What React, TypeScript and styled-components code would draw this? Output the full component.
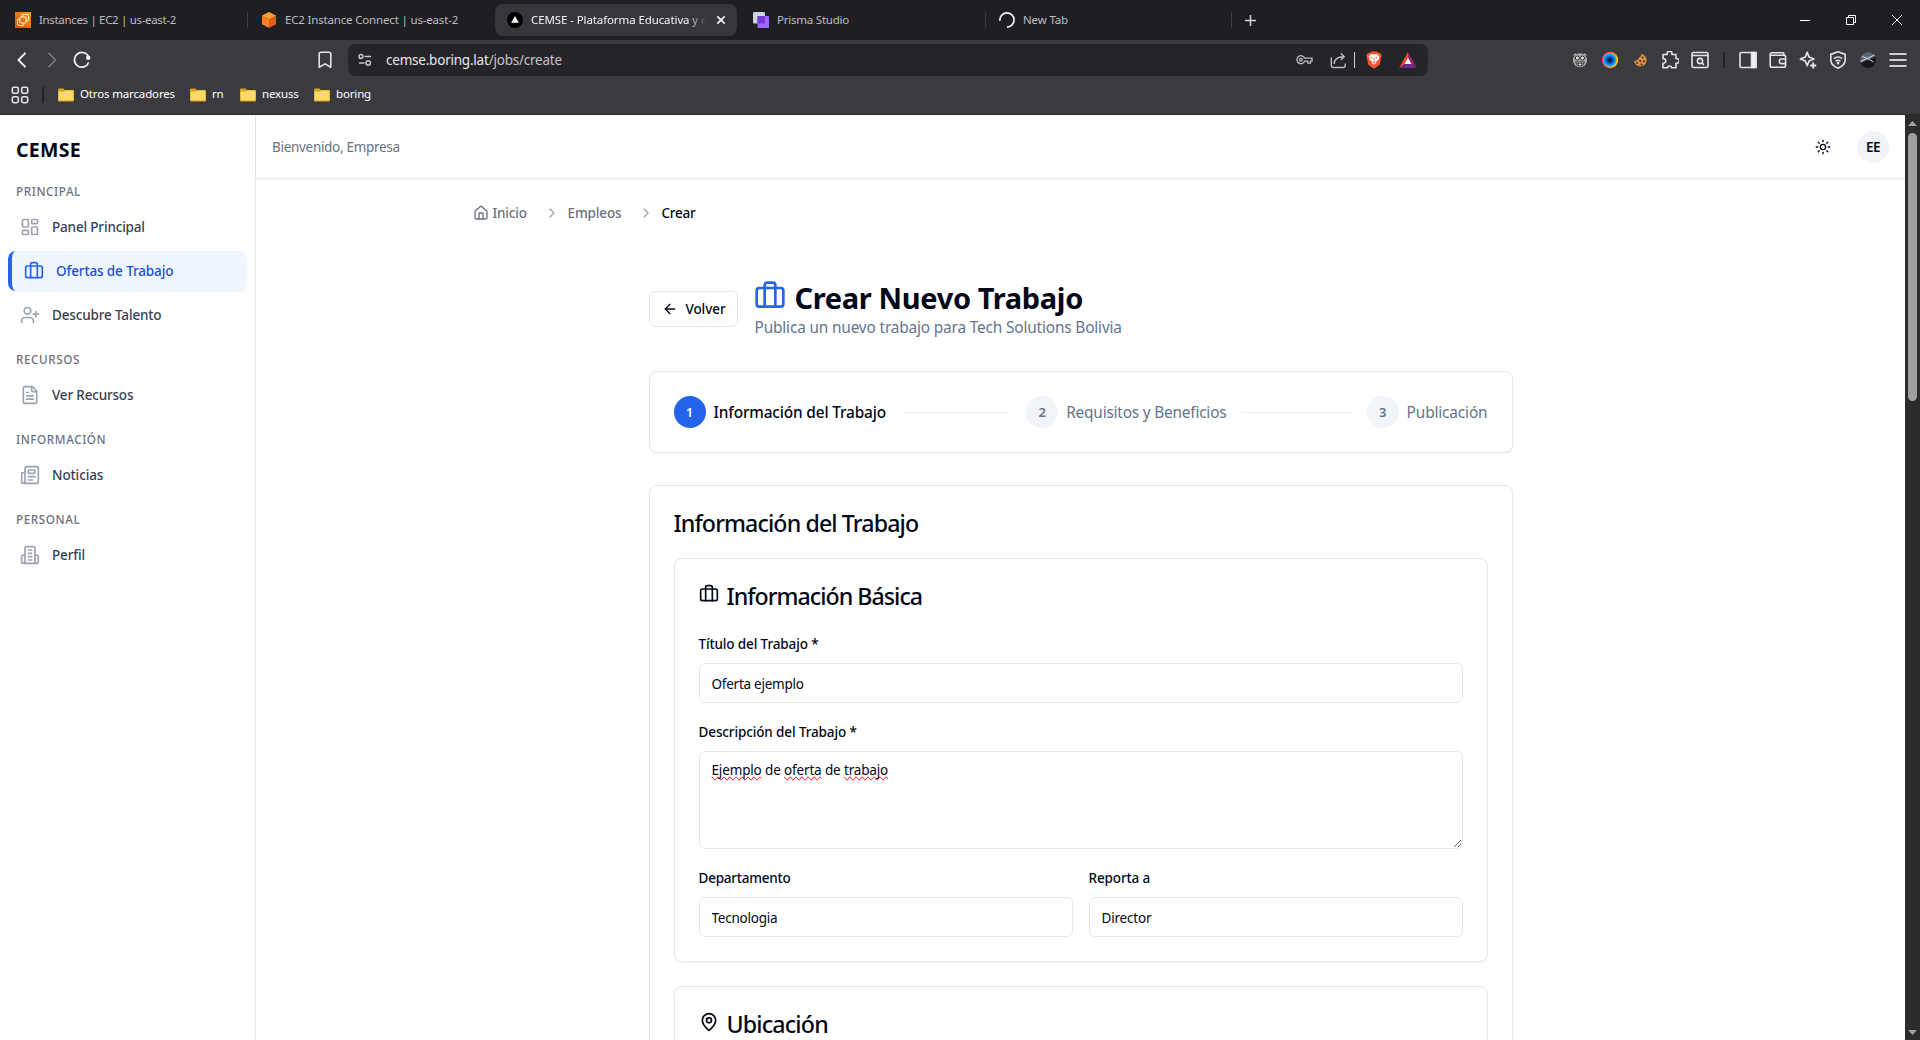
import React from "react";
import styled, { createGlobalStyle, css } from "styled-components";
import {
  ArrowLeft,
  Briefcase,
  ChevronRight,
  FileText,
  House,
  LayoutDashboard,
  MapPin,
  Newspaper,
  Sun,
  UserPlus,
} from "lucide-react";

const GlobalStyle = createGlobalStyle`
  * { box-sizing: border-box; }
  html, body { margin: 0; padding: 0; overflow: hidden; }
  body { font-family: "Noto Sans", "Open Sans", sans-serif; background: #ffffff; }
  svg { display: block; flex: none; }
`;

const Window = styled.div`
  width: 1920px;
  height: 1040px;
  display: flex;
  flex-direction: column;
  overflow: hidden;
`;

const Label = styled.span<{ $ls?: number }>`
  letter-spacing: ${(p) => p.$ls ?? 0}px;
  white-space: nowrap;
`;

/* ---------- Browser: tab strip ---------- */

const TabStrip = styled.div`
  height: 40px;
  flex: none;
  display: flex;
  align-items: center;
  padding-left: 1px;
  background: #1f1e23;
  color: #bdbdc0;
`;

const TabSlot = styled.div<{ $divider?: boolean }>`
  width: 246px;
  height: 32px;
  display: flex;
  align-items: center;
  &::before {
    content: "";
    width: 1px;
    height: 16px;
    margin-right: 1px;
    background: ${(p) => (p.$divider ? "#3d3c41" : "transparent")};
  }
`;

const TabBody = styled.div<{ $active?: boolean }>`
  width: 242px;
  height: 32px;
  display: flex;
  align-items: center;
  gap: 8px;
  padding: 0 8px 0 12px;
  border-radius: 8px;
  font-size: 11.5px;
  ${(p) =>
    p.$active &&
    css`
      background: #37363b;
      color: #f4f4f5;
    `}
`;

const TabTitle = styled.div<{ $faded?: boolean }>`
  flex: 1;
  overflow: hidden;
  white-space: nowrap;
  padding-bottom: 2px;
  ${(p) =>
    p.$faded &&
    css`
      mask-image: linear-gradient(to right, #000 156px, transparent 176px);
    `}
`;

const NewTab = styled.div`
  display: flex;
  align-items: center;
  gap: 13px;
  &::before {
    content: "";
    width: 1px;
    height: 16px;
    background: #3d3c41;
  }
`;

const WindowButtons = styled.div`
  margin-left: auto;
  display: flex;
  > div {
    width: 46px;
    display: flex;
    justify-content: center;
  }
`;

/* ---------- Browser: toolbar ---------- */

const Toolbar = styled.div`
  height: 75px;
  flex: none;
  background: #3b3a3f;
  border-bottom: 1px solid #2b2a2e;
`;

const NavRow = styled.div`
  height: 40px;
  display: flex;
  align-items: center;
`;

const NavButtons = styled.div`
  width: 348px;
  display: flex;
  align-items: center;
  padding: 0 16px 0 13px;
  gap: 12px;
  svg:last-child {
    margin-left: auto;
  }
`;

const AddressBar = styled.div`
  width: 1080px;
  height: 32px;
  display: flex;
  align-items: center;
  padding: 0 11px 0 10px;
  border-radius: 8px;
  background: #252429;
  color: #e9e9ea;
  font-size: 13.5px;
`;

const Url = styled.div`
  flex: 1;
  margin-left: 14px;
  span + span {
    color: #c4c4c6;
  }
`;

const Pipe = styled.div<{ $c: string; $w?: number }>`
  width: ${(p) => p.$w ?? 1}px;
  height: 16px;
  background: ${(p) => p.$c};
`;

const AddressTools = styled.div`
  display: flex;
  align-items: center;
  svg + svg {
    margin-left: 17px;
  }
  ${Pipe} {
    margin: 0 11px 0 7px;
  }
`;

const ToolIcons = styled.div`
  flex: 1;
  display: flex;
  justify-content: flex-end;
  align-items: center;
  padding-right: 13px;
  gap: 12px;
  ${Pipe} {
    margin: 0 2px;
  }
`;

const BookmarkRow = styled.div`
  height: 29px;
  display: flex;
  align-items: center;
  padding-left: 11px;
  color: #ffffff;
  font-size: 11.5px;
  ${Pipe} {
    margin: 0 14px 0 13px;
  }
`;

const Bookmark = styled.div<{ $w: number }>`
  width: ${(p) => p.$w}px;
  display: flex;
  align-items: center;
  gap: 6px;
  ${Label} {
    padding-bottom: 2px;
  }
`;

/* ---------- Page ---------- */

const Viewport = styled.div`
  flex: 1;
  min-height: 0;
  display: flex;
`;

const Sidebar = styled.aside`
  width: 256px;
  flex: none;
  border-right: 1px solid #e2e8f0;
  padding: 20px 8px 0;
`;

const Brand = styled.div`
  height: 32px;
  line-height: 29px;
  padding-left: 8px;
  font-size: 19.5px;
  font-weight: 700;
  color: #020817;
  letter-spacing: 0.3px;
`;

const NavHeading = styled.div`
  height: 16px;
  line-height: 16px;
  margin: 16px 0 8px;
  padding-left: 8px;
  font-size: 11.7px;
  font-weight: 500;
  letter-spacing: 0.58px;
  color: #6b7280;
`;

const NavItem = styled.div<{ $active?: boolean }>`
  height: 40px;
  display: flex;
  align-items: center;
  gap: 12px;
  padding-left: 12px;
  border-radius: 8px;
  font-size: 13.5px;
  font-weight: 500;
  color: #374151;
  svg {
    color: #9ca3af;
  }
  & + & {
    margin-top: 4px;
  }
  ${(p) =>
    p.$active &&
    css`
      border-left: 4px solid #2563eb;
      background: #eff6ff;
      color: #1d4ed8;
      box-shadow: 0 1px 2px rgba(0, 0, 0, 0.05);
      svg {
        color: #2563eb;
      }
    `}
`;

const Main = styled.main`
  flex: 1;
  min-width: 0;
  display: flex;
  flex-direction: column;
`;

const Header = styled.header`
  height: 64px;
  flex: none;
  display: flex;
  align-items: center;
  padding: 0 16px;
  border-bottom: 1px solid #e5e7eb;
  box-shadow: 0 1px 2px rgba(0, 0, 0, 0.05);
  font-size: 13.5px;
  color: #6b7280;
`;

const HeaderActions = styled.div`
  margin-left: auto;
  display: flex;
  align-items: center;
  color: #020817;
`;

const Avatar = styled.div`
  width: 32px;
  height: 32px;
  margin-left: 26px;
  border-radius: 50%;
  display: flex;
  align-items: center;
  justify-content: center;
  background: #f1f5f9;
  color: #020817;
  font-weight: 600;
  letter-spacing: -0.5px;
`;

const Container = styled.div`
  width: 1280px;
  margin: 0 auto;
  padding: 24px 32px 0;
  flex: 1;
  min-height: 0;
`;

const Breadcrumb = styled.nav`
  height: 20px;
  display: flex;
  align-items: center;
  font-size: 13.5px;
  font-weight: 500;
  color: #6b7280;
`;

const Crumb = styled.div<{ $current?: boolean; $w?: number }>`
  width: ${(p) => (p.$w ? `${p.$w}px` : "auto")};
  display: flex;
  align-items: center;
  gap: 4px;
  color: ${(p) => (p.$current ? "#020817" : "inherit")};
`;

const CrumbArrow = styled(ChevronRight)`
  margin: 0 8px 0 16px;
  color: #9ca3af;
`;

const Form = styled.div`
  width: 864px;
  margin: 56px auto 0;
  color: #020817;
`;

const TitleBar = styled.div`
  display: flex;
  align-items: center;
  gap: 17px;
  height: 60px;
`;

const BackButton = styled.button`
  width: 89px;
  height: 36px;
  display: flex;
  align-items: center;
  gap: 8px;
  padding: 0 0 0 12px;
  border: 1px solid #e2e8f0;
  border-radius: 6px;
  background: #ffffff;
  color: #020817;
  font: 500 13.5px "Noto Sans", sans-serif;
`;

const Title = styled.h1`
  display: flex;
  gap: 9px;
  height: 36px;
  margin: 0;
  line-height: 38px;
  font-size: 29px;
  font-weight: 700;
  svg {
    color: #2563eb;
    margin: 1px 0 0 -1px;
  }
`;

const Subtitle = styled.p`
  margin: 0;
  padding-top: 1px;
  font-size: 15.4px;
  line-height: 23px;
  color: #64748b;
`;

const Card = styled.section<{ $mt?: number }>`
  margin-top: ${(p) => p.$mt ?? 32}px;
  padding: 24px;
  border: 1px solid #e2e8f0;
  border-radius: 8px;
  background: #ffffff;
  box-shadow: 0 1px 2px rgba(0, 0, 0, 0.05);
`;

const Stepper = styled.div`
  display: flex;
  align-items: center;
  font-size: 15.4px;
`;

const Step = styled.div<{ $active?: boolean }>`
  display: flex;
  align-items: center;
  gap: 8px;
  color: ${(p) => (p.$active ? "#020817" : "#64748b")};
  font-weight: ${(p) => (p.$active ? 500 : 400)};
`;

const StepNumber = styled.div<{ $active?: boolean }>`
  width: 32px;
  height: 32px;
  border-radius: 50%;
  display: flex;
  align-items: center;
  justify-content: center;
  font-size: 13px;
  font-weight: 600;
  background: ${(p) => (p.$active ? "#2563eb" : "#f1f5f9")};
  color: ${(p) => (p.$active ? "#f8fafc" : "#64748b")};
`;

const StepLine = styled.div`
  flex: 1;
  height: 1px;
  margin: 0 16px;
  background: #eff3f8;
`;

const CardTitle = styled.h3`
  display: flex;
  align-items: center;
  gap: 8px;
  height: 24px;
  margin: 0;
  padding-top: 1px;
  font-size: 23.2px;
  font-weight: 500;
  line-height: 24px;
  svg {
    margin-top: -3px;
  }
`;

const Fields = styled.div`
  display: grid;
  grid-template-columns: 1fr 1fr;
  gap: 16px;
  margin-top: 24px;
`;

const Field = styled.div<{ $wide?: boolean }>`
  grid-column: ${(p) => (p.$wide ? "1 / -1" : "auto")};
`;

const FieldLabel = styled.label<{ $ls: number }>`
  display: block;
  height: 24px;
  margin-bottom: 8px;
  line-height: 27px;
  font-size: 13.5px;
  font-weight: 500;
  letter-spacing: ${(p) => p.$ls}px;
`;

const Input = styled.input<{ $ls: number }>`
  display: block;
  width: 100%;
  height: 40px;
  padding: 2px 12px 0;
  border: 1px solid #e2e8f0;
  border-radius: 6px;
  outline: none;
  background: #ffffff;
  color: #020817;
  font: 400 13.5px "Noto Sans", sans-serif;
  letter-spacing: ${(p) => p.$ls}px;
`;

const TextArea = styled.div`
  height: 98px;
  padding: 8px 12px;
  border: 1px solid #e2e8f0;
  border-radius: 6px;
  overflow: hidden;
  resize: vertical;
  font-size: 13.5px;
  line-height: 20px;
  letter-spacing: -0.15px;
`;

const Misspelled = styled.span`
  text-decoration-line: spelling-error;
`;

/* ---------- Scrollbar ---------- */

const Scrollbar = styled.div`
  width: 15px;
  flex: none;
  display: flex;
  flex-direction: column;
  align-items: center;
  padding: 6px 0 5px;
  background: #2c2c2c;
`;

const Thumb = styled.div`
  width: 9px;
  height: 268px;
  margin: 7px 0 auto;
  border-radius: 5px;
  background: #9f9f9f;
`;

/* ---------- Drawn icons ---------- */

const line = { fill: "none", stroke: "#e4e4e6", strokeWidth: 1.6 } as const;

const Ec2Icon = () => (
  <svg width="16" height="16" viewBox="0 0 16 16">
    <defs>
      <linearGradient id="ec2" x1="0" y1="1" x2="1" y2="0">
        <stop offset="0" stopColor="#cf5508" />
        <stop offset="1" stopColor="#ff9a06" />
      </linearGradient>
    </defs>
    <rect width="16" height="16" fill="url(#ec2)" />
    <g fill="none" stroke="#fff" strokeWidth="0.9">
      <path d="M7 5V3.400q0-.8.8-.8h4.900q.8 0 .8.8V8q0 .8-.8.8h-1.500" />
      <path d="M4.800 7.400H3.400q-.8 0-.8.8v4.400q0 .8.8.8H8q.8 0 .8-.8V11" />
      <rect x="4.900" y="5" width="6.200" height="6" rx="0.800" />
    </g>
  </svg>
);

const CubeIcon = () => (
  <svg width="16" height="16" viewBox="0 0 16 16">
    <path d="M8 0l7 3.600L8 7.600 1 3.600z" fill="#ff9d2e" />
    <path d="M1 3.600l7 4V16l-7-3.800z" fill="#f8812a" />
    <path d="M15 3.600l-7 4V16l7-3.800z" fill="#ea5a1c" />
  </svg>
);

const VercelIcon = () => (
  <svg width="16" height="16" viewBox="0 0 16 16">
    <circle cx="8" cy="8" r="8" fill="#000" />
    <path d="M8 4l3.800 6.800H4.200z" fill="#fff" />
  </svg>
);

const PrismaIcon = () => (
  <svg width="16" height="16" viewBox="0 0 16 16">
    <rect width="12" height="11.500" rx="1" fill="#cbd5e0" />
    <rect x="4.500" y="4" width="11.500" height="12" rx="1" fill="#9f67ff" />
    <rect x="4.500" y="4" width="7.500" height="7.500" fill="#7738d8" />
  </svg>
);

const SpinnerIcon = () => (
  <svg width="16" height="16" viewBox="0 0 16 16" fill="none" stroke="#f0f0f1" strokeWidth="1.700">
    <path d="M.9 8.800A7.100 7.100 0 1 1 8 15.100" />
  </svg>
);

const FolderIcon = () => (
  <svg width="16" height="14" viewBox="0 0 16 14">
    <path d="M0 1.600Q0 .6 1 .6h4.500L7 2h8q1 0 1 1v9.400q0 1-1 1H1q-1 0-1-1z" fill="#d9a321" />
    <path d="M.6 3.600h5.600l1.400-1h7.200q.6 0 .6.8v8.200q0 1-1 1H1.400q-.8 0-.8-.8z" fill="#ffda66" />
  </svg>
);

const BraveIcon = () => (
  <svg width="16" height="18" viewBox="0 0 16 18">
    <path d="M5 .5h6l1.500 1.400 1.800.2 1.500 2.400-.6 1.600-1.200 6.400q-.3 1.300-1.600 2.200L8 17.800l-4.400-3.100Q2.300 13.800 2 12.500L.8 6.100.2 4.500l1.500-2.400 1.800-.2z" fill="#fb542b" />
    <path d="M5 3l3 .5L11 3l2.400 2.600-.9 3.200-2.500 2 .3 1.200L8 13.800 5.700 12l.3-1.200-2.500-2-.9-3.200z" fill="#fff" />
    <path d="M4.300 6l2.300.6-.8 1.100zM11.700 6l-2.300.6.8 1.100zM8 5.600l.5 3.300L8 10l-.5-1.100zM6.300 11L8 10.200l1.700.8L8 12.200z" fill="#fb542b" />
  </svg>
);

const BatIcon = () => (
  <svg width="18" height="16" viewBox="0 0 18 16">
    <path d="M9 0L0 16l9-6z" fill="#ff4724" />
    <path d="M9 0l9 16-9-6z" fill="#9e1f63" />
    <path d="M0 16h18l-9-6z" fill="#662d91" />
    <path d="M9 5.800l3.400 6.200H5.600z" fill="#fff" />
  </svg>
);

const RingIcon = () => (
  <svg width="18" height="18" viewBox="0 0 18 18">
    <defs>
      <linearGradient id="ring" x1="0" y1="0" x2="1" y2="0.4">
        <stop offset="0" stopColor="#e0249a" />
        <stop offset="0.5" stopColor="#ff6a3d" />
        <stop offset="1" stopColor="#ffc400" />
      </linearGradient>
      <radialGradient id="iris">
        <stop offset="0.15" stopColor="#03194a" />
        <stop offset="0.6" stopColor="#0a6be0" />
        <stop offset="1" stopColor="#27c4ff" />
      </radialGradient>
    </defs>
    <circle cx="9" cy="9" r="8.200" fill="url(#ring)" />
    <circle cx="8.800" cy="9" r="6.600" fill="url(#iris)" />
  </svg>
);

const MaskIcon = () => (
  <svg width="18" height="18" viewBox="0 0 18 18">
    <circle cx="9" cy="9.200" r="7" fill="#a9a9a7" />
    <path d="M2.500 4.500l2-1.800 1 2M15.500 4.500l-2-1.800-1 2" fill="none" stroke="#c9c9c7" />
    <circle cx="6.300" cy="7" r="2" fill="#eee" stroke="#222" />
    <circle cx="11.500" cy="7" r="2" fill="#eee" stroke="#222" />
    <path d="M4.500 11h9q-1 4-4.500 4t-4.500-4z" fill="#f2f2f0" stroke="#222" strokeWidth="0.900" />
    <path d="M7.300 11v3.500M10.500 11v3.500M5 12.600h8" stroke="#333" strokeWidth="0.700" />
  </svg>
);

const CookieIcon = () => (
  <svg width="18" height="18" viewBox="0 0 18 18">
    <path d="M10.500 3A6.300 6.300 0 1 1 3 9.800c1 .6 2.400.2 2.700-1C7 9.100 8 8 7.600 6.900 9 6.500 10.200 4.800 10.500 3z" fill="#d98f45" />
    <g fill="#4a2611">
      <circle cx="11.500" cy="6.500" r="1" />
      <circle cx="9.300" cy="10" r="1.100" />
      <circle cx="13" cy="10.300" r="1" />
      <circle cx="6" cy="12" r="0.900" />
      <circle cx="10.500" cy="13.500" r="1" />
    </g>
  </svg>
);

const PuzzleIcon = () => (
  <svg width="18" height="18" viewBox="0 0 18 18" {...line} strokeLinejoin="round">
    <path d="M2 3.500h4.200a2.500 2.500 0 1 1 4.700 0H15v4.100a2.400 2.400 0 1 1 0 4.600v4.600h-4.300a2.200 2.200 0 0 0-4.300 0H2v-4.600a2.300 2.300 0 1 0 0-4.500z" />
  </svg>
);

const SearchPanelIcon = () => (
  <svg width="18" height="18" viewBox="0 0 18 18" {...line}>
    <rect x="1" y="1.500" width="16" height="15" rx="1.500" />
    <path d="M1 4.500h16M10.900 11.900l2 2" />
    <circle cx="9" cy="10" r="2.600" />
  </svg>
);

const SidePanelIcon = () => (
  <svg width="18" height="18" viewBox="0 0 18 18" {...line}>
    <rect x="1" y="1.500" width="16" height="15" rx="1" />
    <path d="M12.500 1.500H17v15h-4.500z" fill="#f0f0f2" />
  </svg>
);

const WalletIcon = () => (
  <svg width="18" height="18" viewBox="0 0 18 18" {...line}>
    <path d="M15 4.300V3q0-1.300-1.300-1.300H3Q1.200 1.700 1.200 3.200V14.500q0 1.800 1.800 1.800h11.800q1.800 0 1.800-1.800V6q0-1.700-1.800-1.700H2M16.600 8h-4a2.300 2.300 0 0 0 0 4.600h4" />
  </svg>
);

const SparkIcon = () => (
  <svg width="18" height="18" viewBox="0 0 18 18" {...line} strokeLinejoin="round">
    <path d="M8.200 1.200l1.900 4.900 4.900 1.900-4.900 1.900-1.900 4.900-1.900-4.900L1.400 8l4.900-1.900z" />
    <path d="M14.200 11.500v6M11.200 14.500h6" strokeWidth="1.900" />
  </svg>
);

const ShieldIcon = () => (
  <svg width="18" height="18" viewBox="0 0 18 18" {...line}>
    <path d="M9 .8l7.200 2.600v5.400q0 5.600-7.200 8.400-7.200-2.800-7.200-8.400V3.400z" />
    <path d="M4.800 7.700q4.200-3.200 8.400 0M6.600 10.200q2.400-1.800 4.800 0" strokeWidth="1.500" />
    <circle cx="9" cy="12.200" r="0.600" fill="#e4e4e6" />
  </svg>
);

const PlanetIcon = () => (
  <svg width="18" height="18" viewBox="0 0 18 18">
    <circle cx="9" cy="9" r="8" fill="#15161a" />
    <path d="M1 9a8 8 0 0 1 15.300-3.300L1.800 12z" fill="#5b6270" />
    <path d="M1.500 10.500l14-6.500M3 5.500q6 1.500 11.500 5.500" stroke="#d6dae2" strokeWidth="1" fill="none" />
  </svg>
);

const MenuIcon = () => (
  <svg width="18" height="18" viewBox="0 0 18 18" stroke="#cfcfd2" strokeWidth="2">
    <path d="M.5 3h17M.5 9h17M.5 15h17" />
  </svg>
);

const BuildingIcon = () => (
  <svg
    width="20"
    height="20"
    viewBox="0 0 24 24"
    fill="none"
    stroke="currentColor"
    strokeWidth="2"
    strokeLinecap="round"
    strokeLinejoin="round"
  >
    <path d="M6 22V4a2 2 0 0 1 2-2h8a2 2 0 0 1 2 2v18Z" />
    <path d="M6 12H4a2 2 0 0 0-2 2v6a2 2 0 0 0 2 2h2" />
    <path d="M18 12h2a2 2 0 0 1 2 2v6a2 2 0 0 1-2 2h-2" />
    <path d="M10 6h4M10 10h4M10 14h4M10 18h4" />
  </svg>
);

const UpTriangle = () => (
  <svg width="9" height="5" viewBox="0 0 9 5">
    <path d="M4.500 0L9 5H0z" fill="#9f9f9f" />
  </svg>
);

const DownTriangle = () => (
  <svg width="9" height="5" viewBox="0 0 9 5">
    <path d="M4.500 5L9 0H0z" fill="#9f9f9f" />
  </svg>
);

const tabs = [
  { icon: <Ec2Icon />, title: "Instances | EC2 | us-east-2", ls: -0.33 },
  { icon: <CubeIcon />, title: "EC2 Instance Connect | us-east-2", ls: -0.17, divider: true },
  { icon: <VercelIcon />, title: "CEMSE - Plataforma Educativa y d", ls: -0.1, active: true },
  { icon: <PrismaIcon />, title: "Prisma Studio", ls: -0.22 },
  { icon: <SpinnerIcon />, title: "New Tab", ls: -0.14, divider: true },
];

const bookmarks = [
  { title: "Otros marcadores", width: 132 },
  { title: "rn", width: 50 },
  { title: "nexuss", width: 74 },
  { title: "boring", width: 70 },
];

const Browser = () => (
  <>
    <TabStrip>
      {tabs.map((t) => (
        <TabSlot key={t.title} $divider={t.divider}>
          <TabBody $active={t.active}>
            {t.icon}
            <TabTitle $faded={t.active}>
              <Label $ls={t.ls}>{t.title}</Label>
            </TabTitle>
            {t.active && (
              <svg width="16" height="16" viewBox="0 0 16 16" stroke="#f4f4f5" strokeWidth="1.7">
                <path d="M4.300 4.300l7.400 7.400M11.700 4.300l-7.400 7.400" />
              </svg>
            )}
          </TabBody>
        </TabSlot>
      ))}
      <NewTab>
        <svg width="11" height="11" viewBox="0 0 11 11" stroke="#d4d4d6" strokeWidth="1.5">
          <path d="M5.500 0v11M0 5.500h11" />
        </svg>
      </NewTab>
      <WindowButtons>
        <div>
          <svg width="10" height="10" viewBox="0 0 10 10" stroke="#fff">
            <path d="M0 5.500h10" />
          </svg>
        </div>
        <div>
          <svg width="10" height="10" viewBox="0 0 10 10" stroke="#fff" fill="none">
            <path d="M.5 2.500h7v7h-7zM2.500 2.500v-2h7v7h-2" />
          </svg>
        </div>
        <div>
          <svg width="10" height="10" viewBox="0 0 10 10" stroke="#fff">
            <path d="M0 0l10 10M10 0L0 10" />
          </svg>
        </div>
      </WindowButtons>
    </TabStrip>

    <Toolbar>
      <NavRow>
        <NavButtons>
          <svg width="18" height="18" viewBox="0 0 18 18" fill="none" stroke="#f4f4f5" strokeWidth="1.9">
            <path d="M12.500 1.800L5.500 9l7 7.200" />
          </svg>
          <svg width="18" height="18" viewBox="0 0 18 18" fill="none" stroke="#77767b" strokeWidth="1.7">
            <path d="M5.500 1.800L12.500 9l-7 7.200" />
          </svg>
          <svg width="18" height="18" viewBox="0 0 18 18" fill="none" stroke="#f4f4f5" strokeWidth="1.7">
            <path d="M15.700 11.500A7.400 7.400 0 1 1 15.300 5.200" />
            <circle cx="15.200" cy="6.800" r="2.200" fill="#f4f4f5" stroke="none" />
          </svg>
          <svg width="14" height="18" viewBox="0 0 14 18" fill="none" stroke="#e4e4e6" strokeWidth="1.6" strokeLinejoin="round">
            <path d="M1.200 3q0-1.800 1.800-1.800h8q1.800 0 1.800 1.800v13.300L7 12.900l-5.800 3.400z" />
          </svg>
        </NavButtons>
        <AddressBar>
          <svg width="14" height="14" viewBox="0 0 14 14" fill="none" stroke="#c8c8ca" strokeWidth="1.5">
            <circle cx="3" cy="3.500" r="1.900" />
            <path d="M6.500 3.500H13M1 10h5.500" />
            <circle cx="10.200" cy="10" r="2.200" />
          </svg>
          <Url>
            <Label $ls={-0.22}>cemse.boring.lat</Label>
            <Label $ls={-0.22}>/jobs/create</Label>
          </Url>
          <AddressTools>
            <svg width="17" height="12" viewBox="0 0 17 12" fill="none" stroke="#bcbcbe" strokeWidth="1.3">
              <path d="M8.600 4.200H16v3h-1.500v2h-2.700v-2H8.600A4 4 0 1 1 8.600 4.200z" />
              <circle cx="4.900" cy="5.800" r="1.400" />
            </svg>
            <svg width="17" height="17" viewBox="0 0 17 17" fill="none" stroke="#bcbcbe" strokeWidth="1.4">
              <path d="M1.300 5.500v8q0 2 2 2h9.900q2 0 2-2v-2M4 12q.3-7 9.500-7.300M10.800 1.300l3.400 3.400-3.400 3.400" />
            </svg>
            <Pipe $c="#d2d2d4" />
            <BraveIcon />
            <BatIcon />
          </AddressTools>
        </AddressBar>
        <ToolIcons>
          <MaskIcon />
          <RingIcon />
          <CookieIcon />
          <PuzzleIcon />
          <SearchPanelIcon />
          <Pipe $c="#222125" $w={2} />
          <SidePanelIcon />
          <WalletIcon />
          <SparkIcon />
          <ShieldIcon />
          <PlanetIcon />
          <MenuIcon />
        </ToolIcons>
      </NavRow>
      <BookmarkRow>
        <svg width="18" height="18" viewBox="0 0 18 18" {...line}>
          <rect x="1.300" y="1.300" width="6" height="6" rx="1.600" />
          <rect x="10.700" y="1.300" width="6" height="6" rx="1.600" />
          <rect x="1.300" y="10.700" width="6" height="6" rx="1.600" />
          <rect x="10.700" y="10.700" width="6" height="6" rx="1.600" />
        </svg>
        <Pipe $c="#222125" $w={2} />
        {bookmarks.map((b) => (
          <Bookmark key={b.title} $w={b.width}>
            <FolderIcon />
            <Label $ls={-0.15}>{b.title}</Label>
          </Bookmark>
        ))}
      </BookmarkRow>
    </Toolbar>
  </>
);

const Navigation = () => (
  <Sidebar>
    <Brand>CEMSE</Brand>
    <NavHeading>PRINCIPAL</NavHeading>
    <NavItem>
      <LayoutDashboard size={20} />
      <Label $ls={-0.17}>Panel Principal</Label>
    </NavItem>
    <NavItem $active>
      <Briefcase size={20} />
      <Label $ls={-0.12}>Ofertas de Trabajo</Label>
    </NavItem>
    <NavItem>
      <UserPlus size={20} />
      <Label $ls={-0.15}>Descubre Talento</Label>
    </NavItem>
    <NavHeading>RECURSOS</NavHeading>
    <NavItem>
      <FileText size={20} />
      <Label $ls={-0.18}>Ver Recursos</Label>
    </NavItem>
    <NavHeading>INFORMACIÓN</NavHeading>
    <NavItem>
      <Newspaper size={20} />
      <Label $ls={-0.1}>Noticias</Label>
    </NavItem>
    <NavHeading>PERSONAL</NavHeading>
    <NavItem>
      <BuildingIcon />
      <Label $ls={-0.15}>Perfil</Label>
    </NavItem>
  </Sidebar>
);

const JobForm = () => (
  <Form>
    <TitleBar>
      <BackButton>
        <ArrowLeft size={16} />
        <Label $ls={-0.08}>Volver</Label>
      </BackButton>
      <div>
        <Title>
          <Briefcase size={32} />
          <Label $ls={-0.35}>Crear Nuevo Trabajo</Label>
        </Title>
        <Subtitle>
          <Label $ls={-0.165}>Publica un nuevo trabajo para Tech Solutions Bolivia</Label>
        </Subtitle>
      </div>
    </TitleBar>

    <Card>
      <Stepper>
        <Step $active>
          <StepNumber $active>1</StepNumber>
          <Label $ls={-0.15}>Información del Trabajo</Label>
        </Step>
        <StepLine />
        <Step>
          <StepNumber>2</StepNumber>
          <Label $ls={-0.2}>Requisitos y Beneficios</Label>
        </Step>
        <StepLine />
        <Step>
          <StepNumber>3</StepNumber>
          <Label $ls={-0.14}>Publicación</Label>
        </Step>
      </Stepper>
    </Card>

    <Card>
      <CardTitle>
        <Label $ls={-0.89}>Información del Trabajo</Label>
      </CardTitle>
      <Card $mt={24}>
        <CardTitle>
          <Briefcase size={20} />
          <Label $ls={-0.98}>Información Básica</Label>
        </CardTitle>
        <Fields>
          <Field $wide>
            <FieldLabel $ls={-0.13}>Título del Trabajo *</FieldLabel>
            <Input $ls={-0.25} defaultValue="Oferta ejemplo" />
          </Field>
          <Field $wide>
            <FieldLabel $ls={-0.12}>Descripción del Trabajo *</FieldLabel>
            <TextArea>
              <Misspelled>Ejemplo</Misspelled> de <Misspelled>oferta</Misspelled> de{" "}
              <Misspelled>trabajo</Misspelled>
            </TextArea>
          </Field>
          <Field>
            <FieldLabel $ls={-0.23}>Departamento</FieldLabel>
            <Input $ls={-0.22} defaultValue="Tecnologia" />
          </Field>
          <Field>
            <FieldLabel $ls={-0.13}>Reporta a</FieldLabel>
            <Input $ls={-0.2} defaultValue="Director" />
          </Field>
        </Fields>
      </Card>
      <Card $mt={24}>
        <CardTitle>
          <MapPin size={20} />
          <Label $ls={-0.82}>Ubicación</Label>
        </CardTitle>
      </Card>
    </Card>
  </Form>
);

export default function App() {
  return (
    <Window>
      <GlobalStyle />
      <Browser />
      <Viewport>
        <Navigation />
        <Main>
          <Header>
            <Label $ls={-0.3}>Bienvenido, Empresa</Label>
            <HeaderActions>
              <Sun size={16} />
              <Avatar>EE</Avatar>
            </HeaderActions>
          </Header>
          <Container>
            <Breadcrumb>
              <Crumb $w={55}>
                <House size={16} />
                <Label $ls={-0.2}>Inicio</Label>
              </Crumb>
              <CrumbArrow size={16} />
              <Crumb $w={54}>
                <Label $ls={-0.13}>Empleos</Label>
              </Crumb>
              <CrumbArrow size={16} />
              <Crumb $current>
                <Label $ls={-0.24}>Crear</Label>
              </Crumb>
            </Breadcrumb>
            <JobForm />
          </Container>
        </Main>
        <Scrollbar>
          <UpTriangle />
          <Thumb />
          <DownTriangle />
        </Scrollbar>
      </Viewport>
    </Window>
  );
}
